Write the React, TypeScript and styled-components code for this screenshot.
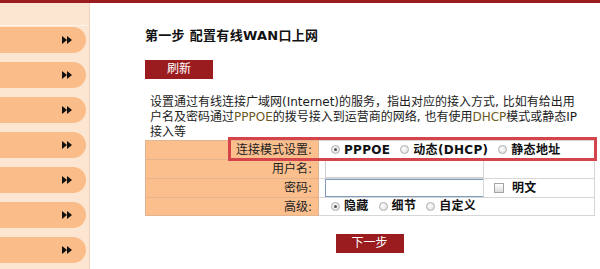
import {FC} from 'react';
import styled, {createGlobalStyle} from 'styled-components';

const GlobalStyle = createGlobalStyle`
  html, body {
    margin: 0;
    padding: 0;
    background: #ffffff;
  }
  body {
    font-family: "DejaVu Sans", "Noto Sans CJK SC", sans-serif;
    font-size: 12px;
    color: #222222;
  }
`;

const TopBar = styled.div`
  height: 3px;
  background: #9b1c1f;
`;

const Layout = styled.div`
  display: flex;
  min-height: calc(100vh - 3px);
`;

const Sidebar = styled.div`
  width: 89px;
  flex-shrink: 0;
  background: #fde6d1;
  border-right: 1px solid #efd3bb;
`;

const SideHead = styled.div`
  height: 22px;
  border-bottom: 1px solid #fff4ea;
  margin-bottom: 1px;
`;

const MenuItem = styled.div`
  width: 86px;
  height: 26px;
  margin-bottom: 9px;
  box-sizing: border-box;
  display: flex;
  align-items: center;
  justify-content: flex-end;
  padding-right: 14px;
  background: #fabc88;
  border-radius: 0 13px 13px 0;
`;

const Main = styled.div`
  flex: 1;
  padding: 25px 0 0 55px;
`;

const Title = styled.h1`
  margin: 0;
  font-size: 13px;
  line-height: 16px;
  font-weight: bold;
  letter-spacing: 0.3px;
  color: #111111;
`;

const RedButton = styled.div`
  width: 68px;
  height: 19px;
  line-height: 19px;
  background: #9b1c1f;
  color: #ffffff;
  font-size: 12px;
  text-align: center;
`;

const RefreshButton = styled(RedButton)`
  margin-top: 16px;
`;

const Intro = styled.p`
  margin: 16px 0 0;
  padding-left: 5px;
  font-size: 12px;
  line-height: 15px;
  white-space: nowrap;
  color: #1c1c1c;
`;

const Term = styled.span`
  color: #6b5a24;
`;

const FormWrap = styled.div`
  position: relative;
  width: 449px;
`;

const Highlight = styled.div`
  position: absolute;
  left: 83px;
  top: -3px;
  width: 369px;
  height: 24px;
  box-sizing: border-box;
  border: 3px solid #d5434b;
  pointer-events: none;
`;

const Table = styled.table`
  width: 449px;
  border-collapse: collapse;
  table-layout: fixed;
`;

const Row = styled.tr<{$h?: number}>`
  height: ${p => p.$h ?? 19}px;
`;

const Label = styled.td`
  padding: 0 6px 0 0;
  text-align: right;
  background: #fbbf8e;
  border: 1px solid #e3b48e;
  font-size: 12px;
  line-height: 16px;
  white-space: nowrap;
`;

const Cell = styled.td<{$pl?: number}>`
  padding: 0 0 0 ${p => p.$pl ?? 12}px;
  border: 1px solid #d6d6d6;
  background: #ffffff;
  white-space: nowrap;
  font-size: 12px;
  line-height: 16px;
`;

const Option = styled.span`
  display: inline-flex;
  align-items: center;
  margin-right: 10px;
  font-weight: bold;
  letter-spacing: 0.3px;
  color: #111111;
`;

const RadioDot = styled.span<{$checked?: boolean}>`
  position: relative;
  width: 9px;
  height: 9px;
  margin-right: 4px;
  box-sizing: border-box;
  border: 1px solid #b0b0b0;
  border-radius: 50%;
  background: radial-gradient(circle at 40% 40%, #ffffff, #d8d8d8);
  &::after {
    content: '';
    display: ${p => (p.$checked ? 'block' : 'none')};
    position: absolute;
    left: 2px;
    top: 2px;
    width: 3px;
    height: 3px;
    border-radius: 50%;
    background: #555555;
  }
`;

const CheckBox = styled.span`
  width: 8px;
  height: 8px;
  margin-right: 8px;
  border: 1px solid #a4a4a4;
  background: linear-gradient(#ffffff, #dcdcdc);
`;

const TextBox = styled.div<{$focus?: boolean}>`
  height: 18px;
  box-sizing: border-box;
  border: 1px solid ${p => (p.$focus ? '#7f9db9' : '#cfcfcf')};
  border-right: none;
`;

const NextRow = styled.div`
  width: 449px;
  display: flex;
  justify-content: center;
  margin-top: 18px;
`;

const Arrows: FC = () => (
  <svg width="10" height="8" viewBox="0 0 10 8">
    <polygon points="0,0 5,4 0,8" fill="#111" />
    <polygon points="5,0 10,4 5,8" fill="#111" />
  </svg>
);

const Radio: FC<{label: string; checked?: boolean}> = ({label, checked}) => (
  <Option>
    <RadioDot $checked={checked} />
    {label}
  </Option>
);

const App: FC = () => {
  return (
    <>
      <GlobalStyle />
      <TopBar />
      <Layout>
        <Sidebar>
          <SideHead />
          {Array.from({length: 7}).map((_, i) => (
            <MenuItem key={i}>
              <Arrows />
            </MenuItem>
          ))}
        </Sidebar>
        <Main>
          <Title>第一步 配置有线WAN口上网</Title>
          <RefreshButton>刷新</RefreshButton>
          <Intro>
            设置通过有线连接广域网(Internet)的服务，指出对应的接入方式, 比如有给出用
            <br />
            户名及密码通过<Term>PPPOE</Term>的拨号接入到运营商的网络, 也有使用<Term>DHCP</Term>模式或静态IP
            <br />
            接入等
          </Intro>
          <FormWrap>
            <Table>
              <colgroup>
                <col style={{width: 173}} />
                <col style={{width: 165}} />
                <col style={{width: 111}} />
              </colgroup>
              <tbody>
                <Row>
                  <Label>连接模式设置:</Label>
                  <Cell colSpan={2}>
                    <Radio label="PPPOE" checked />
                    <Radio label="动态(DHCP)" />
                    <Radio label="静态地址" />
                  </Cell>
                </Row>
                <Row>
                  <Label>用户名:</Label>
                  <Cell $pl={6}>
                    <TextBox />
                  </Cell>
                  <Cell />
                </Row>
                <Row>
                  <Label>密码:</Label>
                  <Cell $pl={6}>
                    <TextBox $focus />
                  </Cell>
                  <Cell $pl={10}>
                    <Option>
                      <CheckBox />
                      明文
                    </Option>
                  </Cell>
                </Row>
                <Row $h={18}>
                  <Label>高级:</Label>
                  <Cell colSpan={2}>
                    <Radio label="隐藏" checked />
                    <Radio label="细节" />
                    <Radio label="自定义" />
                  </Cell>
                </Row>
              </tbody>
            </Table>
            <Highlight />
          </FormWrap>
          <NextRow>
            <RedButton>下一步</RedButton>
          </NextRow>
        </Main>
      </Layout>
    </>
  );
};

export default App;
